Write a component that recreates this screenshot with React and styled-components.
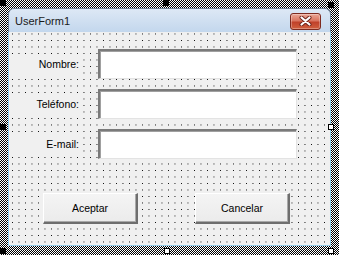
import React from "react"
import styled, { createGlobalStyle } from "styled-components"

const GlobalStyle = createGlobalStyle`
    html, body {
        margin: 0;
        padding: 0;
        background: #fff;
    }
    body {
        font-family: "Liberation Sans", Arial, sans-serif;
        color: #000;
    }
`

// checkered band round the selected form (design mode)
const Selection = styled.div`
    position: relative;
    box-sizing: border-box;
    width: 339px;
    height: 255px;
    padding: 8px 8px 9px 8px;
    background: repeating-conic-gradient(#000 0 25%, #fff 0 50%) 0 0 / 2px 2px;
`

const Handle = styled.div`
    position: absolute;
    box-sizing: border-box;
    width: 6px;
    height: 6px;
    background: ${p => (p.$filled ? "#000" : "#fff")};
    border: 1px solid #000;
`

const Window = styled.div`
    height: 100%;
    display: flex;
    flex-direction: column;
`

const TitleBar = styled.div`
    box-sizing: border-box;
    height: 24px;
    display: flex;
    align-items: center;
    justify-content: space-between;
    padding: 1px 9px 0 6px;
    border: 1px solid #6f8196;
    border-bottom: none;
    border-radius: 6px 6px 0 0;
    background: linear-gradient(#dde8f5, #c3d7ed);
    font-size: 11px;
    color: #1a1a1a;
`

const CloseButton = styled.div`
    box-sizing: border-box;
    width: 31px;
    height: 17px;
    display: flex;
    align-items: center;
    justify-content: center;
    border: 1px solid #7d2a1f;
    border-radius: 3px;
    background: linear-gradient(#eba796 0%, #d9745f 45%, #c0412a 55%, #d0603f 100%);
    box-shadow: inset 0 0 0 1px rgba(255, 255, 255, 0.3);
`

const Body = styled.div`
    flex: 1;
    display: flex;
    flex-direction: column;
    border: 1px solid #94cdea;
    border-top: none;
    background-color: #000;
    background-image:
        linear-gradient(90deg, transparent 1px, #f0f0f0 1px),
        linear-gradient(180deg, transparent 1px, #f0f0f0 1px);
    background-size: 6.5px 6.5px;
    background-position: 3px 8px;
`

const Fields = styled.div`
    display: flex;
    flex-direction: column;
    gap: 10px;
    padding: 17px 0 0 3px;
`

const Row = styled.div`
    display: flex;
    align-items: center;
    gap: 17px;
`

const Label = styled.div`
    width: 69px;
    height: 20px;
    box-sizing: border-box;
    padding-right: 2px;
    display: flex;
    align-items: center;
    justify-content: flex-end;
    background: #f0f0f0;
    font-size: 10.5px;
`

const TextBox = styled.div`
    box-sizing: border-box;
    width: 199px;
    height: 30px;
    background: #fff;
    border-style: solid;
    border-width: 2px 1px 1px 2px;
    border-color: #7a7a7a #e3e3e3 #e3e3e3 #7a7a7a;
    box-shadow: inset 1px 1px 0 #a0a0a0;
`

const Buttons = styled.div`
    display: flex;
    gap: 57px;
    padding: 34px 0 0 34px;
`

const Button = styled.div`
    box-sizing: border-box;
    width: 95px;
    height: 31px;
    display: flex;
    align-items: center;
    justify-content: center;
    background: linear-gradient(#f4f4f4, #ebebeb);
    border-style: solid;
    border-width: 1px 2px 2px 1px;
    border-color: #fff #6e6e6e #6e6e6e #fff;
    box-shadow: inset -1px -1px 0 #a9a9a9;
    font-size: 10.5px;
`

const CloseIcon = () => (
    <svg width="13" height="10" viewBox="0 0 13 10">
        <path d="M2.5 1.5 L10.5 8.5 M10.5 1.5 L2.5 8.5" stroke="#6b2016" strokeWidth="4" strokeLinecap="round" />
        <path d="M2.5 1.5 L10.5 8.5 M10.5 1.5 L2.5 8.5" stroke="#fff" strokeWidth="2.2" strokeLinecap="round" />
    </svg>
)

const fields = ["Nombre:", "Teléfono:", "E-mail:"]

const handles = [
    { left: 0, top: 0, filled: true },
    { left: 163, top: 0, filled: true },
    { left: 328, top: 2, filled: true },
    { left: 0, top: 124, filled: true },
    { left: 328, top: 124, filled: false },
    { left: 0, top: 248, filled: true },
    { left: 164, top: 248, filled: false },
    { left: 328, top: 248, filled: false },
]

const App = () => {
    return (
        <>
            <GlobalStyle />
            <Selection>
                <Window>
                    <TitleBar>
                        <span>UserForm1</span>
                        <CloseButton><CloseIcon /></CloseButton>
                    </TitleBar>
                    <Body>
                        <Fields>
                            {fields.map(f => (
                                <Row key={f}>
                                    <Label>{f}</Label>
                                    <TextBox />
                                </Row>
                            ))}
                        </Fields>
                        <Buttons>
                            <Button>Aceptar</Button>
                            <Button>Cancelar</Button>
                        </Buttons>
                    </Body>
                </Window>
                {handles.map((h, i) => (
                    <Handle key={i} $filled={h.filled} style={{ left: h.left, top: h.top }} />
                ))}
            </Selection>
        </>
    )
}

export default App
